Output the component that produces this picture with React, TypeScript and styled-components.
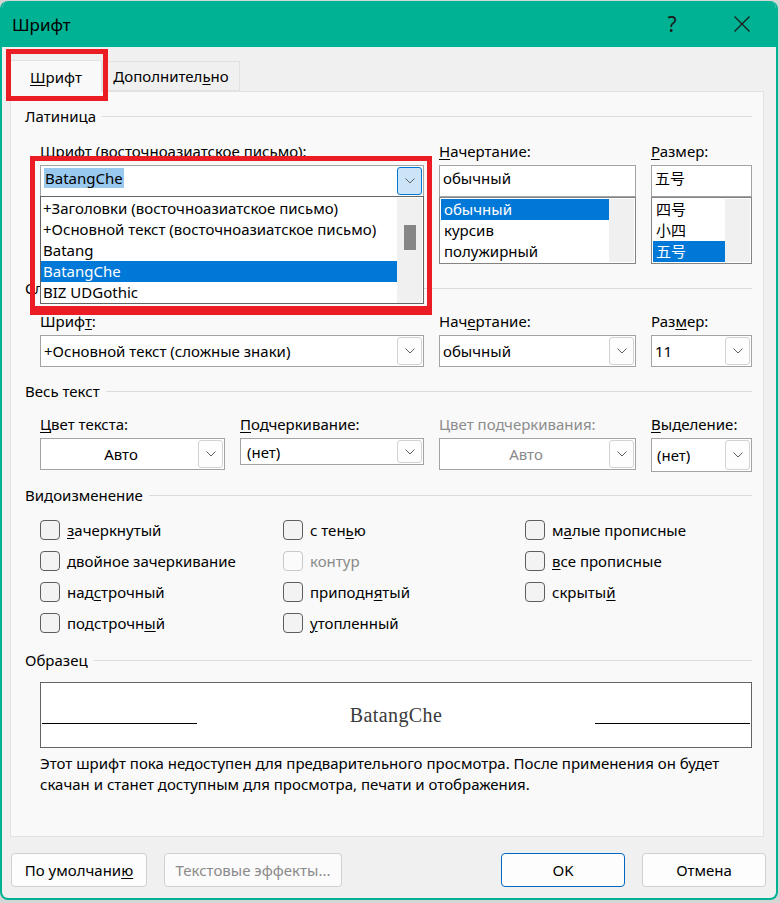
import React from "react";
import styled, { createGlobalStyle } from "styled-components";

const TEAL = "#00b294";

const GlobalStyle = createGlobalStyle`
  html, body { margin: 0; padding: 0; background: #d6d6d6; }
  body {
    font-family: "Noto Sans", "Noto Sans CJK SC", sans-serif;
    font-size: 15px;
    color: #000;
  }
  #root { width: 780px; height: 903px; }
  *, *::before, *::after { box-sizing: border-box; }
`;

const Window = styled.div`
  position: relative;
  margin-top: 1px;
  width: 778px;
  height: 899px;
  background: #f0f0f0;
  border: 2px solid ${TEAL};
  border-top: none;
  border-radius: 8px;
  overflow: hidden;
  display: flex;
  flex-direction: column;
`;

const TitleBar = styled.div`
  flex: none;
  height: 46px;
  background: ${TEAL};
  display: flex;
  align-items: center;
  padding-left: 10px;
`;

const TitleText = styled.div`
  font-size: 17px;
  color: #000;
  flex: 1;
`;

const TitleButton = styled.div<{ $gap?: number }>`
  width: 46px;
  height: 46px;
  display: flex;
  align-items: center;
  justify-content: center;
  margin-right: ${(p) => p.$gap ?? 0}px;
  font-size: 21px;
  color: #1c1c1c;
`;

const Body = styled.div`
  flex: 1;
  display: flex;
  flex-direction: column;
  padding: 13px 12px 11px 8px;
`;

const TabStrip = styled.div`
  display: flex;
  align-items: flex-end;
  height: 32px;
  margin-bottom: -1px;
  position: relative;
  z-index: 2;
`;

const Tab = styled.div<{ $active?: boolean; $w: number }>`
  width: ${(p) => p.$w}px;
  height: ${(p) => (p.$active ? 32 : 30)}px;
  margin-bottom: ${(p) => (p.$active ? 0 : 1)}px;
  border: 1px solid #e2e2e2;
  border-bottom: ${(p) => (p.$active ? "none" : "1px solid #e2e2e2")};
  background: ${(p) => (p.$active ? "#f9f9f9" : "#f0f0f0")};
  display: flex;
  align-items: center;
  justify-content: center;
  font-size: 15px;
`;

const Panel = styled.div`
  flex: none;
  height: 746px;
  border: 1px solid #e2e2e2;
  background: #f9f9f9;
  padding: 14px 11px 0 14px;
  display: flex;
  flex-direction: column;
`;

const SectionHeader = styled.div<{ $mt?: number }>`
  display: flex;
  align-items: center;
  gap: 6px;
  height: 20px;
  line-height: 20px;
  margin-top: ${(p) => p.$mt ?? 0}px;
  white-space: nowrap;
  &::after {
    content: "";
    flex: 1;
    height: 1px;
    background: #dcdcdc;
  }
`;

const FieldGrid = styled.div<{ $cols: string; $mt: number }>`
  display: grid;
  grid-template-columns: ${(p) => p.$cols};
  column-gap: 15px;
  align-items: start;
  margin: ${(p) => p.$mt}px 0 0 15px;
`;

const Field = styled.div`
  display: flex;
  flex-direction: column;
  position: relative;
`;

const FieldLabel = styled.div<{ $muted?: boolean }>`
  height: 20px;
  line-height: 20px;
  margin-bottom: 4px;
  white-space: nowrap;
  color: ${(p) => (p.$muted ? "#8c8c8c" : "#000")};
`;

const Acc = styled.span`
  text-decoration: underline;
  text-decoration-thickness: 1px;
  text-underline-offset: 2px;
`;

const Combo = styled.div<{ $h?: number }>`
  display: flex;
  height: ${(p) => p.$h ?? 32}px;
  border: 1px solid #a3a3a3;
  background: #fff;
  padding: 1px;
`;

const ComboText = styled.div<{ $center?: boolean; $muted?: boolean; $pad?: number; $top?: boolean }>`
  flex: 1;
  display: flex;
  align-items: ${(p) => (p.$top ? "flex-start" : "center")};
  padding-top: ${(p) => (p.$top ? 1 : 0)}px;
  justify-content: ${(p) => (p.$center ? "center" : "flex-start")};
  padding-left: ${(p) => p.$pad ?? 2}px;
  color: ${(p) => (p.$muted ? "#8a8a8a" : "#000")};
  white-space: nowrap;
  overflow: hidden;
  line-height: 20px;
`;

const SelectedText = styled.span`
  background: #99c9ef;
  line-height: 20px;
  padding: 0 1px 0 1px;
`;

const DropButton = styled.div<{ $active?: boolean }>`
  width: 25px;
  flex: none;
  display: flex;
  align-items: center;
  justify-content: center;
  border: 1px solid ${(p) => (p.$active ? "#0078d4" : "#d3d3d3")};
  background: ${(p) => (p.$active ? "#cce4f7" : "#fdfdfd")};
  border-radius: 3px;
`;

const ListBox = styled.div<{ $h: number }>`
  height: ${(p) => p.$h}px;
  border: 1px solid #848484;
  background: #fff;
  padding: 1px;
  display: flex;
`;

const ListItems = styled.div`
  flex: 1;
  display: flex;
  flex-direction: column;
  overflow: hidden;
`;

const ListItem = styled.div<{ $selected?: boolean; $pad?: number }>`
  flex: none;
  height: 21px;
  line-height: 21px;
  padding-left: ${(p) => p.$pad ?? 3}px;
  white-space: nowrap;
  background: ${(p) => (p.$selected ? "#0078d7" : "transparent")};
  color: ${(p) => (p.$selected ? "#fff" : "#000")};
`;

const ScrollTrack = styled.div`
  width: 25px;
  flex: none;
  background: #f0f0f0;
  position: relative;
`;

const ScrollThumb = styled.div`
  position: absolute;
  left: 7px;
  top: 27px;
  width: 12px;
  height: 25px;
  background: #868686;
`;

const Popup = styled.div`
  position: absolute;
  left: 0;
  right: 0;
  top: calc(100% - 1px);
  height: 108px;
  border: 1px solid #646464;
  background: #fff;
  display: flex;
  padding: 1px 1px 0 0;
  z-index: 5;
  overflow: hidden;
`;

const ComboWrap = styled.div`
  position: relative;
`;

const CheckGrid = styled.div`
  display: grid;
  grid-template-columns: 243px 242px 1fr;
  grid-template-rows: repeat(4, 31px);
  grid-auto-flow: column;
  margin: 9px 0 0 15px;
`;

const CheckItem = styled.div<{ $disabled?: boolean }>`
  display: flex;
  align-items: center;
  gap: 7px;
  white-space: nowrap;
  color: ${(p) => (p.$disabled ? "#8a8a8a" : "#000")};
`;

const CheckBox = styled.div<{ $disabled?: boolean }>`
  width: 20px;
  height: 20px;
  flex: none;
  border: 1px solid ${(p) => (p.$disabled ? "#c9c9c9" : "#5e5e5e")};
  border-radius: 4px;
  background: ${(p) => (p.$disabled ? "#fbfbfb" : "#f3f3f3")};
`;

const Preview = styled.div`
  margin: 12px 0 0 15px;
  height: 66px;
  border: 1px solid #646464;
  background: #fff;
  display: grid;
  grid-template-columns: 155px 1fr 155px;
  align-items: center;
  padding: 0 1px;
`;

const PreviewLine = styled.div`
  height: 1px;
  background: #000;
  margin-top: 16px;
`;

const PreviewText = styled.div`
  text-align: center;
  font-family: "Liberation Serif", "DejaVu Serif", serif;
  font-size: 20px;
  letter-spacing: 0.4px;
  color: #3a3a3a;
  line-height: 24px;
`;

const Description = styled.div`
  margin: 5px 0 0 15px;
  line-height: 21px;
  font-size: 15px;
`;

const ButtonRow = styled.div`
  display: flex;
  gap: 17px;
  margin: 16px -2px 0 1px;
`;

const Spacer = styled.div`
  flex: 1;
`;

const DlgButton = styled.div<{ $w: number; $primary?: boolean; $disabled?: boolean }>`
  width: ${(p) => p.$w}px;
  height: 34px;
  border: 1px solid ${(p) => (p.$primary ? "#0067c0" : "#d0d0d0")};
  border-radius: 4px;
  background: ${(p) => (p.$disabled ? "#fbfbfb" : "#fdfdfd")};
  color: ${(p) => (p.$disabled ? "#8a8a8a" : "#000")};
  display: flex;
  align-items: center;
  justify-content: center;
  font-size: 15px;
  white-space: nowrap;
`;

const TabHighlight = styled.div`
  position: absolute;
  left: 4px;
  top: 48px;
  width: 102px;
  height: 52px;
  border: 5px solid #ec1c24;
  pointer-events: none;
  z-index: 10;
`;

const FontListHighlight = styled.div`
  position: absolute;
  left: 28px;
  top: 155px;
  width: 402px;
  height: 159px;
  border: 5px solid #ec1c24;
  border-bottom-width: 9px;
  pointer-events: none;
  z-index: 10;
`;

const Chevron = () => (
  <svg width="10" height="6" viewBox="0 0 10 6">
    <path d="M0.5 0.5 L5 5 L9.5 0.5" fill="none" stroke="#5f5f5f" strokeWidth="1" />
  </svg>
);

const CloseIcon = () => (
  <svg width="16" height="16" viewBox="0 0 16 16">
    <path d="M0.5 0.5 L15.5 15.5 M15.5 0.5 L0.5 15.5" stroke="#1c1c1c" strokeWidth="1.3" />
  </svg>
);

type DropProps = {
  text: React.ReactNode;
  h?: number;
  center?: boolean;
  muted?: boolean;
  pad?: number;
};

const DropCombo = ({ text, h, center, muted, pad }: DropProps) => (
  <Combo $h={h}>
    <ComboText $center={center} $muted={muted} $pad={pad}>
      {text}
    </ComboText>
    <DropButton>
      <Chevron />
    </DropButton>
  </Combo>
);

const fontItems = [
  "+Заголовки (восточноазиатское письмо)",
  "+Основной текст (восточноазиатское письмо)",
  "Batang",
  "BatangChe",
  "BIZ UDGothic",
];

export default function App() {
  return (
    <>
      <GlobalStyle />
      <Window>
        <TitleBar>
          <TitleText>Шрифт</TitleText>
          <TitleButton $gap={24}>?</TitleButton>
          <TitleButton $gap={11}>
            <CloseIcon />
          </TitleButton>
        </TitleBar>
        <Body>
          <TabStrip>
            <Tab $active $w={92}>
              <span>
                <Acc>Ш</Acc>рифт
              </span>
            </Tab>
            <Tab $w={138}>
              <span>
                Дополнител<Acc>ь</Acc>но
              </span>
            </Tab>
          </TabStrip>
          <Panel>
            <SectionHeader>Латиница</SectionHeader>
            <FieldGrid $cols="384px 197px 101px" $mt={15}>
              <Field>
                <FieldLabel>Шрифт (восточноазиатское письмо):</FieldLabel>
                <ComboWrap>
                  <Combo>
                    <ComboText $top>
                      <SelectedText>BatangChe</SelectedText>
                    </ComboText>
                    <DropButton $active>
                      <Chevron />
                    </DropButton>
                  </Combo>
                  <Popup>
                    <ListItems>
                      {fontItems.map((f) => (
                        <ListItem key={f} $pad={2} $selected={f === "BatangChe"}>
                          {f}
                        </ListItem>
                      ))}
                    </ListItems>
                    <ScrollTrack>
                      <ScrollThumb />
                    </ScrollTrack>
                  </Popup>
                </ComboWrap>
              </Field>
              <Field>
                <FieldLabel>
                  <Acc>Н</Acc>ачертание:
                </FieldLabel>
                <Combo>
                  <ComboText $top $pad={2}>обычный</ComboText>
                </Combo>
                <ListBox $h={67}>
                  <ListItems>
                    <ListItem $selected>обычный</ListItem>
                    <ListItem>курсив</ListItem>
                    <ListItem>полужирный</ListItem>
                  </ListItems>
                  <ScrollTrack />
                </ListBox>
              </Field>
              <Field>
                <FieldLabel>
                  <Acc>Р</Acc>азмер:
                </FieldLabel>
                <Combo>
                  <ComboText $top $pad={2}>五号</ComboText>
                </Combo>
                <ListBox $h={67}>
                  <ListItems>
                    <ListItem>四号</ListItem>
                    <ListItem>小四</ListItem>
                    <ListItem $selected>五号</ListItem>
                  </ListItems>
                  <ScrollTrack />
                </ListBox>
              </Field>
            </FieldGrid>

            <SectionHeader $mt={14}>Сложные знаки</SectionHeader>
            <FieldGrid $cols="384px 197px 101px" $mt={13}>
              <Field>
                <FieldLabel>
                  Шриф<Acc>т</Acc>:
                </FieldLabel>
                <DropCombo text="+Основной текст (сложные знаки)" />
              </Field>
              <Field>
                <FieldLabel>
                  Нач<Acc>е</Acc>ртание:
                </FieldLabel>
                <DropCombo text="обычный" />
              </Field>
              <Field>
                <FieldLabel>
                  Раз<Acc>м</Acc>ер:
                </FieldLabel>
                <DropCombo text="11" />
              </Field>
            </FieldGrid>

            <SectionHeader $mt={14}>Весь текст</SectionHeader>
            <FieldGrid $cols="185px 184px 197px 101px" $mt={13}>
              <Field>
                <FieldLabel>
                  <Acc>Ц</Acc>вет текста:
                </FieldLabel>
                <DropCombo text="Авто" center />
              </Field>
              <Field>
                <FieldLabel>
                  <Acc>П</Acc>одчеркивание:
                </FieldLabel>
                <DropCombo text="(нет)" h={27} pad={5} />
              </Field>
              <Field>
                <FieldLabel $muted>Цвет подчеркивания:</FieldLabel>
                <DropCombo text="Авто" center muted />
              </Field>
              <Field>
                <FieldLabel>
                  <Acc>В</Acc>ыделение:
                </FieldLabel>
                <DropCombo text="(нет)" h={34} pad={4} />
              </Field>
            </FieldGrid>

            <SectionHeader $mt={13}>Видоизменение</SectionHeader>
            <CheckGrid>
              <CheckItem>
                <CheckBox />
                <span>
                  <Acc>з</Acc>ачеркнутый
                </span>
              </CheckItem>
              <CheckItem>
                <CheckBox />
                <span>
                  <Acc>д</Acc>войное зачеркивание
                </span>
              </CheckItem>
              <CheckItem>
                <CheckBox />
                <span>
                  над<Acc>с</Acc>трочный
                </span>
              </CheckItem>
              <CheckItem>
                <CheckBox />
                <span>
                  подстрочн<Acc>ы</Acc>й
                </span>
              </CheckItem>
              <CheckItem>
                <CheckBox />
                <span>
                  с тен<Acc>ь</Acc>ю
                </span>
              </CheckItem>
              <CheckItem $disabled>
                <CheckBox $disabled />
                <span>контур</span>
              </CheckItem>
              <CheckItem>
                <CheckBox />
                <span>
                  приподн<Acc>я</Acc>тый
                </span>
              </CheckItem>
              <CheckItem>
                <CheckBox />
                <span>
                  <Acc>у</Acc>топленный
                </span>
              </CheckItem>
              <CheckItem>
                <CheckBox />
                <span>
                  м<Acc>а</Acc>лые прописные
                </span>
              </CheckItem>
              <CheckItem>
                <CheckBox />
                <span>
                  <Acc>в</Acc>се прописные
                </span>
              </CheckItem>
              <CheckItem>
                <CheckBox />
                <span>
                  скрыты<Acc>й</Acc>
                </span>
              </CheckItem>
            </CheckGrid>

            <SectionHeader $mt={12}>Образец</SectionHeader>
            <Preview>
              <PreviewLine />
              <PreviewText>BatangChe</PreviewText>
              <PreviewLine />
            </Preview>
            <Description>
              Этот шрифт пока недоступен для предварительного просмотра. После применения он будет
              <br />
              скачан и станет доступным для просмотра, печати и отображения.
            </Description>
          </Panel>
          <ButtonRow>
            <DlgButton $w={136}>
              <span>
                По умолчани<Acc>ю</Acc>
              </span>
            </DlgButton>
            <DlgButton $w={178} $disabled>
              Текстовые эффекты...
            </DlgButton>
            <Spacer />
            <DlgButton $w={124} $primary>
              OK
            </DlgButton>
            <DlgButton $w={124}>Отмена</DlgButton>
          </ButtonRow>
        </Body>
        <TabHighlight />
        <FontListHighlight />
      </Window>
    </>
  );
}
